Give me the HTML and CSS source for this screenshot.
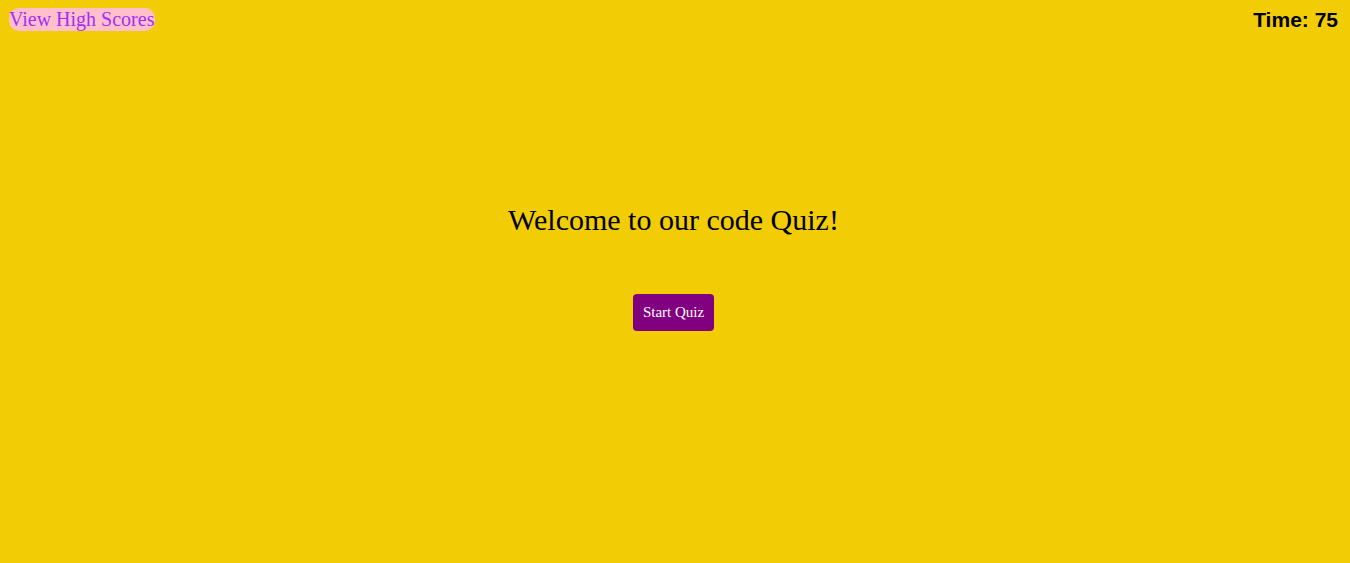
FILE: index.html
```html
<!DOCTYPE html>
<html>
<head>
<meta charset="utf-8">
<link rel="stylesheet" href="styles.css">
</head>
<body>
<header class="top-bar">
  <a class="scores-link" href="#">View High Scores</a>
  <div class="timer">Time: 75</div>
</header>
<main class="intro">
  <h1 class="intro-title">Welcome to our code Quiz!</h1>
  <button class="start-btn">Start Quiz</button>
</main>
</body>
</html>
```
FILE: styles.css
```css
html {
  background: #f2cd06;
  height: 100%;
}
body {
  margin: 8px 12px 8px 9px;
  font-family: "Liberation Serif", "Times New Roman", serif;
}
.top-bar {
  display: flex;
  justify-content: space-between;
  align-items: flex-start;
}
.scores-link {
  font-size: 20px;
  line-height: 23px;
  color: #a52ef5;
  background: #ffc0cb;
  border-radius: 10px;
  padding: 0 1px 0 0;
  text-decoration: none;
}
.timer {
  font-family: "Liberation Sans", Arial, sans-serif;
  font-weight: bold;
  font-size: 21px;
  line-height: 23px;
  color: #000;
}
.intro {
  display: flex;
  flex-direction: column;
  align-items: center;
  padding-top: 172px;
}
.intro-title {
  font-size: 30px;
  font-weight: normal;
  line-height: 34px;
  margin: 0;
}
.start-btn {
  margin-top: 57px;
  background: #800080;
  color: #fff;
  border: none;
  border-radius: 4px;
  font-family: "Liberation Serif", "Times New Roman", serif;
  font-size: 15px;
  padding: 0 10px;
  height: 37px;
}
```
